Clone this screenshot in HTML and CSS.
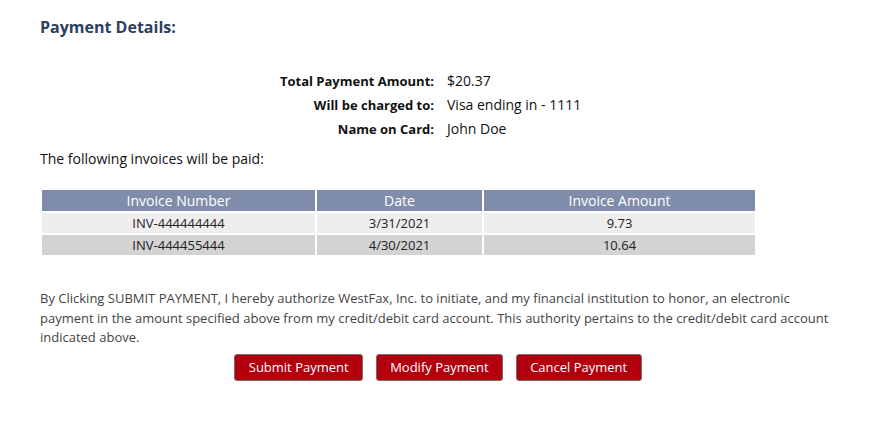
FILE: index.html
```html
<!DOCTYPE html>
<html>
<head>
<meta charset="utf-8">
<link rel="stylesheet" href="styles.css">
</head>
<body>
<div class="page">
  <h2 class="title">Payment Details:</h2>
  <div class="summary">
    <div class="label">Total Payment Amount:</div><div class="value">$20.37</div>
    <div class="label">Will be charged to:</div><div class="value">Visa ending in - 1111</div>
    <div class="label">Name on Card:</div><div class="value">John Doe</div>
  </div>
  <p class="intro">The following invoices will be paid:</p>
  <table class="invoices">
    <thead>
      <tr><th class="c1">Invoice Number</th><th class="c2">Date</th><th class="c3">Invoice Amount</th></tr>
    </thead>
    <tbody>
      <tr class="odd"><td>INV-444444444</td><td>3/31/2021</td><td>9.73</td></tr>
      <tr class="even"><td>INV-444455444</td><td>4/30/2021</td><td>10.64</td></tr>
    </tbody>
  </table>
  <p class="legal">By Clicking SUBMIT PAYMENT, I hereby authorize WestFax, Inc. to initiate, and my financial institution to honor, an electronic payment in the amount specified above from my credit/debit card account. This authority pertains to the credit/debit card account indicated above.</p>
  <div class="actions">
    <button class="btn">Submit Payment</button>
    <button class="btn">Modify Payment</button>
    <button class="btn">Cancel Payment</button>
  </div>
</div>
</body>
</html>
```

FILE: styles.css
```css
html, body {
  margin: 0;
  padding: 0;
  background: #ffffff;
}
body {
  font-family: "Open Sans", "Liberation Sans", sans-serif;
  color: #222222;
}
.page {
  padding: 0 40px;
  width: 794px;
}
.title {
  margin: 0;
  padding-top: 16px;
  font-size: 16px;
  line-height: 22px;
  font-weight: 700;
  color: #2e3f5e;
}
.summary {
  display: grid;
  grid-template-columns: 394px auto;
  column-gap: 13px;
  row-gap: 0;
  margin-top: 31px;
}
.label {
  text-align: right;
  font-weight: 700;
  font-size: 13px;
  line-height: 24px;
  color: #111111;
}
.value {
  font-size: 14px;
  line-height: 24px;
  color: #111111;
}
.intro {
  margin: 7px 0 0;
  font-size: 14px;
  line-height: 22px;
  color: #111111;
}
.invoices {
  margin-top: 18px;
  width: 717px;
  border-collapse: separate;
  border-spacing: 2px;
  font-size: 13px;
}
.invoices th {
  background: #7f8dab;
  color: #ffffff;
  font-weight: 400;
  font-size: 14px;
  height: 21px;
  padding: 0;
  line-height: 21px;
}
.invoices .c1 { width: 273px; }
.invoices .c2 { width: 165px; }
.invoices td {
  text-align: center;
  height: 20px;
  padding: 0;
  line-height: 20px;
  color: #222222;
}
.invoices .odd td { background: #eeeeee; }
.invoices .even td { background: #d3d3d3; }
.legal {
  margin: 32px 0 0;
  font-size: 13px;
  line-height: 19.5px;
  color: #444444;
}
.actions {
  display: flex;
  justify-content: center;
  gap: 12.5px;
  margin-top: 6px;
  padding-left: 2px;
}
.btn {
  font-family: "Open Sans", "Liberation Sans", sans-serif;
  font-size: 13px;
  color: #ffffff;
  background: #b3000f;
  border: 1px solid #7a6a6a;
  border-radius: 3px;
  height: 27px;
  padding: 0 13.5px;
  cursor: pointer;
}
```
